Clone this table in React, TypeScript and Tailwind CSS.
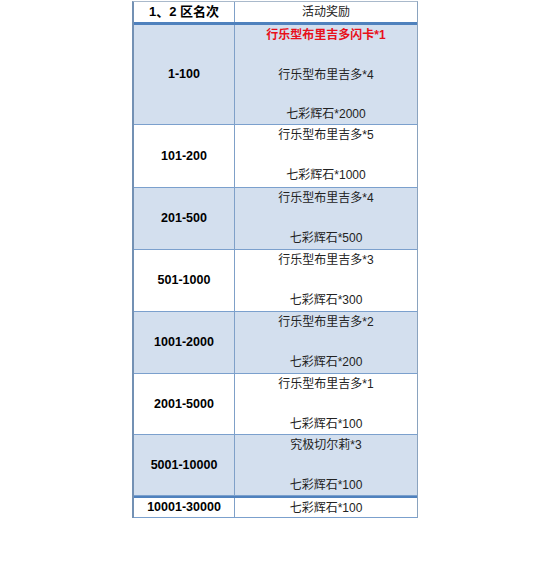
import React from 'react'

interface Row {
  rank: string
  shaded: boolean
  height: string
  lines: { text: string; red?: boolean }[]
}

const rows: Row[] = [
  {
    rank: '1-100',
    shaded: true,
    height: 'h-[100px]',
    lines: [
      { text: '行乐型布里吉多闪卡*1', red: true },
      { text: '' },
      { text: '行乐型布里吉多*4' },
      { text: '' },
      { text: '七彩辉石*2000' },
    ],
  },
  {
    rank: '101-200',
    shaded: false,
    height: 'h-[63px]',
    lines: [{ text: '行乐型布里吉多*5' }, { text: '' }, { text: '七彩辉石*1000' }],
  },
  {
    rank: '201-500',
    shaded: true,
    height: 'h-[62px]',
    lines: [{ text: '行乐型布里吉多*4' }, { text: '' }, { text: '七彩辉石*500' }],
  },
  {
    rank: '501-1000',
    shaded: false,
    height: 'h-[62px]',
    lines: [{ text: '行乐型布里吉多*3' }, { text: '' }, { text: '七彩辉石*300' }],
  },
  {
    rank: '1001-2000',
    shaded: true,
    height: 'h-[62px]',
    lines: [{ text: '行乐型布里吉多*2' }, { text: '' }, { text: '七彩辉石*200' }],
  },
  {
    rank: '2001-5000',
    shaded: false,
    height: 'h-[61px]',
    lines: [{ text: '行乐型布里吉多*1' }, { text: '' }, { text: '七彩辉石*100' }],
  },
  {
    rank: '5001-10000',
    shaded: true,
    height: 'h-[61px]',
    lines: [{ text: '究极切尔莉*3' }, { text: '' }, { text: '七彩辉石*100' }],
  },
]

export default function App() {
  return (
    <div className="w-[550px] h-[577px] bg-white font-['Liberation_Sans','Noto_Sans_CJK_SC',sans-serif] text-[12px] text-[#222]">
      <div className="ml-[132px] mt-[1px] w-[286px] border-l-2 border-l-[#7391b4] border-r border-r-[#8aa3bf] border-t border-t-[#a9b9cb]">
        {/* Header */}
        <div className="flex h-[23px] border-b-[3px] border-b-[#4f81bd] bg-white">
          <div className="w-[101px] flex items-center justify-center font-bold text-[13px] text-black border-r border-r-[#7fa0c8]">
            1、2 区名次
          </div>
          <div className="flex-1 flex items-center justify-center">活动奖励</div>
        </div>

        {rows.map((row, index) => (
          <div
            key={index}
            className={`flex ${row.height} border-b border-b-[#7ba0cd] ${
              row.shaded ? 'bg-[#d3dfee]' : 'bg-white'
            }`}
          >
            <div className="w-[101px] flex items-center justify-center font-bold text-[12.5px] text-black border-r border-r-[#7fa0c8]">
              {row.rank}
            </div>
            <div className="flex-1 flex flex-col items-center justify-start">
              {row.lines.map((line, i) => (
                <div
                  key={i}
                  className={`h-[20px] leading-[20px] ${
                    line.red ? 'text-[#e8101a] font-bold' : ''
                  }`}
                >
                  {line.text}
                </div>
              ))}
            </div>
          </div>
        ))}

        {/* Last row */}
        <div className="flex h-[22px] border-t-2 border-t-[#4f81bd] border-b border-b-[#7ba0cd] bg-white">
          <div className="w-[101px] flex items-center justify-center font-bold text-[12.5px] text-black border-r border-r-[#7fa0c8]">
            10001-30000
          </div>
          <div className="flex-1 flex items-center justify-center">七彩辉石*100</div>
        </div>
      </div>
    </div>
  )
}
